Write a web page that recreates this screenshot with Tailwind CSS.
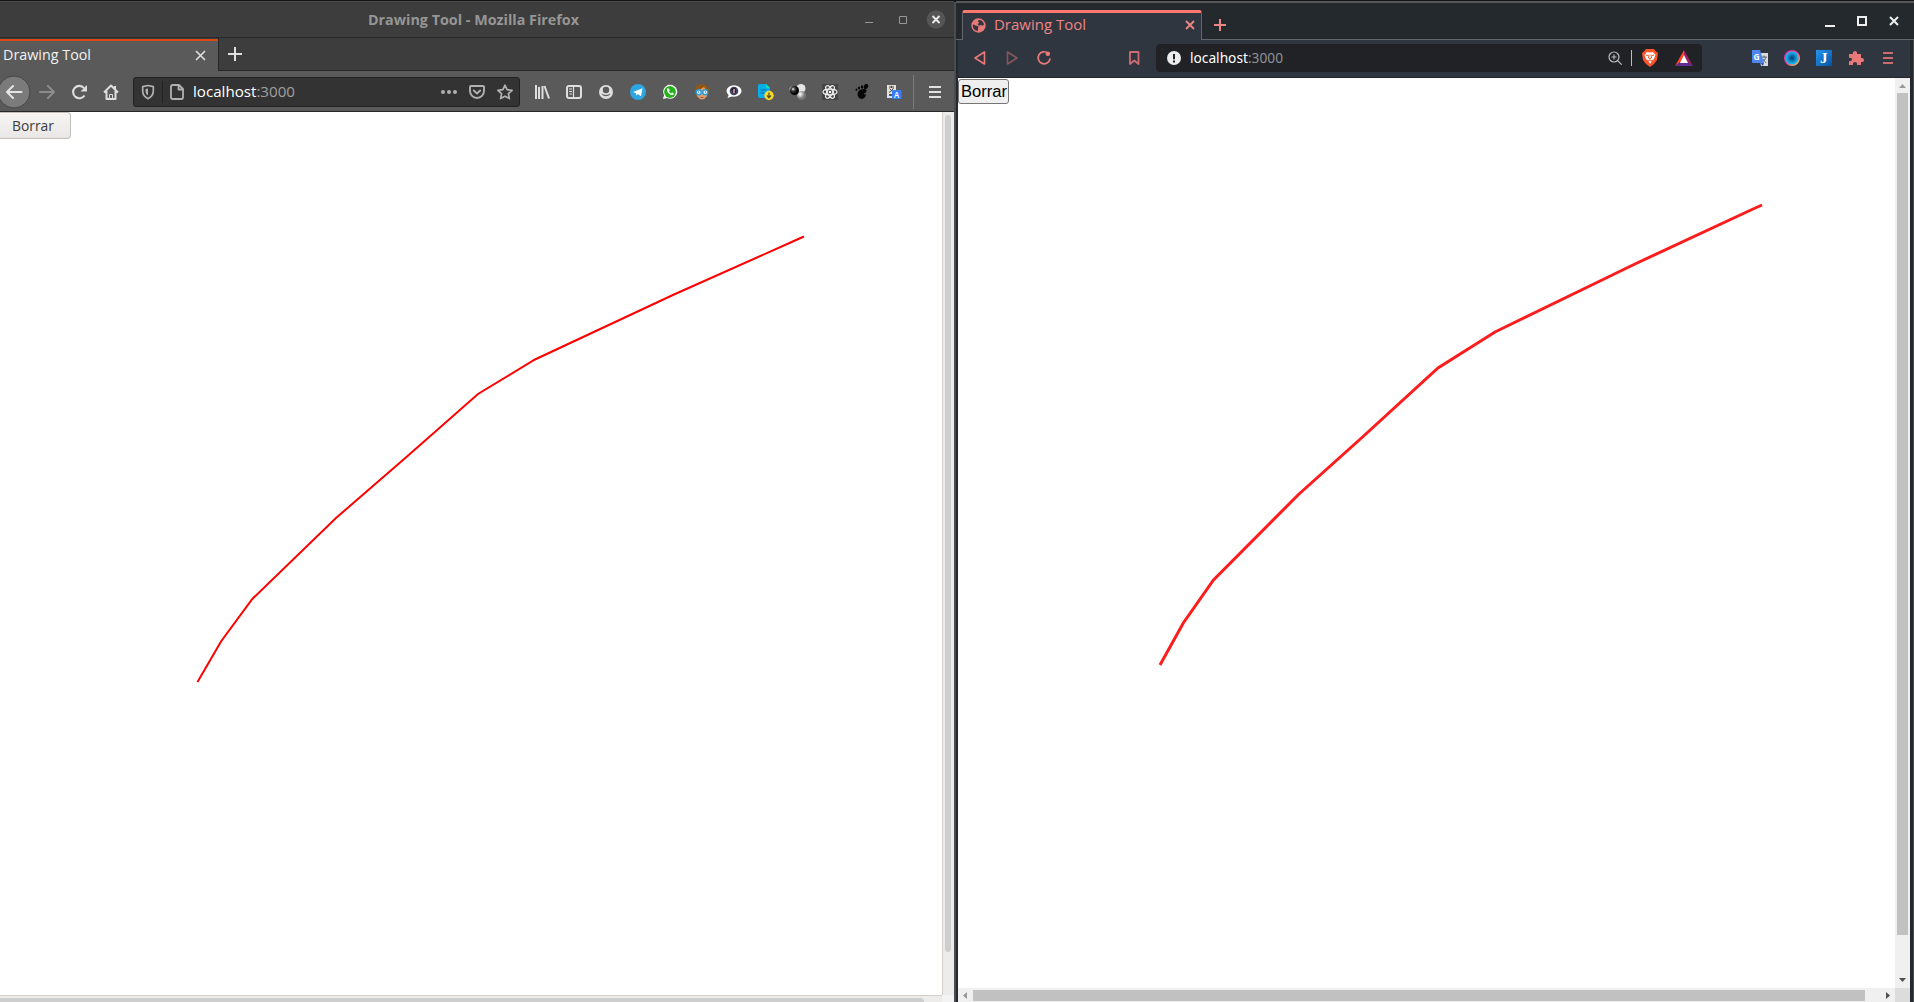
<!DOCTYPE html>
<html lang="es">
<head>
<meta charset="utf-8">
<title>Drawing Tool</title>
<script src="https://cdn.jsdelivr.net/npm/@tailwindcss/browser@4"></script>
</head>
<body class="w-[1914px] h-[1002px] overflow-hidden bg-[#111] flex font-['Open_Sans',sans-serif]">

<!-- Firefox window -->
<section class="w-[954px] h-full flex flex-col shrink-0 bg-[#3d3d3d]">
  <header class="h-[38px] shrink-0 flex items-center border-t border-t-[#151515] border-b border-b-[#292929]">
    <div class="w-full h-full border-t border-[#4a4a4a] flex items-center">
      <h1 class="ml-[368px] w-[215px] text-[13.5px] font-bold text-[#969696] whitespace-nowrap leading-none"><svg class="block overflow-visible" width="211" height="18"><text x="0" y="14" textLength="211" lengthAdjust="spacingAndGlyphs" fill="#969696">Drawing Tool - Mozilla Firefox</text></svg></h1>
      <div class="ml-auto flex items-center pr-[9px] text-[#969696]">
        <svg class="mr-[14px]" width="20" height="18"><path d="M8 11.500h8" stroke="currentColor"/></svg>
        <svg class="mr-[14px]" width="20" height="18"><path d="M8.500 5.500h7v7h-7z" stroke="currentColor" fill="none"/></svg>
        <svg width="20" height="18" class="overflow-visible"><circle cx="11" cy="8.500" r="9.300" fill="#565656"/><path d="m7.500 5 7 7m0-7-7 7" stroke="#eee" stroke-width="1.800"/></svg>
      </div>
    </div>
  </header>

  <div class="h-[33px] shrink-0 flex">
    <div class="w-[218px] h-full mt-px bg-[#5a5a5a] border-t-2 border-[#dd4814] flex items-center">
      <svg class="overflow-visible ml-[3px]" width="90" height="20"><text x="0" y="13" font-size="14" textLength="88" lengthAdjust="spacingAndGlyphs" fill="#f2f2f2">Drawing Tool</text></svg>
      <svg class="ml-auto mr-[12px] mb-[2px]" width="11" height="11"><path d="m1 1 9 9m0-9-9 9" stroke="#ddd" stroke-width="1.700"/></svg>
    </div>
    <div class="grow h-full border-l border-b border-[#272727] flex items-center">
      <svg class="ml-[9px]" width="14" height="14"><path d="M7 0v14M0 7h14" stroke="#e0e0e0" stroke-width="2"/></svg>
    </div>
  </div>

  <nav class="h-[41px] shrink-0 bg-[#5a5a5a] border-b border-[#272727] pt-px flex items-center text-[#dedede]">
    <div class="w-[31px] h-[34px] overflow-hidden flex justify-end shrink-0">
      <svg class="shrink-0" width="34" height="34" viewBox="0 0 34 34"><circle cx="17" cy="17" r="16" fill="#7b7b7b" stroke="#454545"/><path d="M24.500 17H10m6-6-6 6 6 6" fill="none" stroke="#e5e5e5" stroke-width="2" stroke-linecap="round" stroke-linejoin="round"/></svg>
    </div>
    <div class="flex w-24 shrink-0">
      <svg class="mx-2" width="16" height="16" fill="none" stroke="#8c8c8c" stroke-width="2" stroke-linecap="round" stroke-linejoin="round"><path d="M1 8h14M9 2l6 6-6 6"/></svg>
      <svg class="mx-2" width="16" height="16" fill="none" stroke="currentColor" stroke-width="2.100"><path d="M13.500 11.500A6.200 6.200 0 1 1 13 4"/><path d="M9.500 7.500H16V1z" fill="currentColor" stroke="none"/></svg>
      <svg class="mx-2" width="16" height="16" fill="none" stroke="currentColor" stroke-width="2" stroke-linejoin="round"><path d="m1 8.500 7-7 7 7M3.500 7v8h9V7M12 2v3"/><path d="M6.500 15v-4.500h3V15z" stroke-width="1"/></svg>
    </div>
    <div class="ml-[6px] w-[387px] h-[30px] shrink-0 rounded-[3px] border border-[#222] bg-[#333] flex items-center text-[#b1b1b3]">
      <svg class="ml-[6px]" width="16" height="16" fill="none" stroke="currentColor" stroke-width="1.700" stroke-linejoin="round"><path d="M8 1.500 13.300 2.700V7c0 4-2.500 6.200-5.300 7.700C5.200 13.200 2.700 11 2.700 7V2.700z"/><path d="M8 4.500 5.500 5v2c0 2.200 1 3.500 2.500 4.600z" fill="currentColor" stroke="none"/></svg>
      <div class="w-px h-[22px] bg-[#222] ml-[6px]"></div>
      <svg class="ml-[6px]" width="16" height="16" fill="none" stroke="currentColor" stroke-width="1.800" stroke-linejoin="round"><path d="M3.500 1H10l4 4v8.500a1.500 1.500 0 0 1-1.500 1.500h-9A1.500 1.500 0 0 1 2 13.500v-11A1.500 1.500 0 0 1 3.500 1zM9.500 1v4.500H14"/></svg>
      <svg class="ml-[8px] overflow-visible" width="104" height="20"><text x="0" y="15" font-size="14.500" textLength="102" lengthAdjust="spacingAndGlyphs" fill="#fff">localhost<tspan fill="#a0a0a0">:3000</tspan></text></svg>
      <svg class="ml-auto" width="16" height="16" fill="currentColor"><circle cx="2" cy="8" r="2"/><circle cx="8" cy="8" r="2"/><circle cx="14" cy="8" r="2"/></svg>
      <svg class="ml-3" width="16" height="16" fill="none" stroke="currentColor" stroke-width="1.900" stroke-linecap="round" stroke-linejoin="round"><path d="M2 2h12a1 1 0 0 1 1 1v4a7 7 0 0 1-14 0V3a1 1 0 0 1 1-1z"/><path d="m4.800 6.500 3.200 3 3.200-3"/></svg>
      <svg class="ml-3 mr-[6px]" width="16" height="16" fill="none" stroke="currentColor" stroke-width="1.700" stroke-linejoin="round"><path d="m8 1.200 2.100 4.500 5 .6-3.700 3.400 1 4.900L8 12.200l-4.400 2.400 1-4.900L.9 6.300l5-.6z"/></svg>
    </div>
    <div class="ml-[6px] flex shrink-0">
      <svg class="mx-2" width="16" height="16" fill="none" stroke="currentColor" stroke-width="2"><path d="M2 1v14M5 3v12M8.500 2v13M10.500 2l4.500 12.500"/></svg>
      <svg class="mx-2" width="16" height="16" fill="none" stroke="currentColor"><rect x="1" y="2" width="14" height="12" rx="2" stroke-width="2"/><path d="M7.500 2v12" stroke-width="1.200"/><path d="M3 5h3M3 7.500h3M3.500 10H6"/></svg>
      <svg class="mx-2" width="16" height="16"><circle cx="8" cy="8" r="7" fill="currentColor"/><path d="M8 2.800a3.200 3.200 0 1 1 0 6.400 3.200 3.200 0 0 1 0-6.400M3.500 9.200c1 4 8 4 9 0-2.500 2.300-6.500 2.300-9 0" fill="#5a5a5a"/></svg>
      <svg class="mx-2" width="16" height="16"><circle cx="8" cy="8" r="8" fill="#2ca5e0"/><path d="M3 8 12.500 4.200 11 12.300 7.800 10l-1.300 1.700-.5-2.500z" fill="#fff"/></svg>
      <svg class="mx-2" width="16" height="16"><path d="m1 15 1.100-3.900A7 7 0 1 1 5 13.900z" fill="#fff"/><circle cx="8" cy="8" r="5.900" fill="#24b31b"/><path d="M5.500 4.200c-2.200 2.300 2.600 8.500 6 6.200.9-.9-.3-1.500-1.500-1.900l-.8.900c-1.200-.5-1.900-1.200-2.200-2.200l.7-.8c-.4-1.400-.8-2.500-2.200-2.200z" fill="#fff"/></svg>
      <svg class="mx-2" width="16" height="16"><path d="M1.500 9C0 3 3 .5 8 .5S16 3 14.500 9l-1 4h-11z" fill="#945711"/><path d="M3 6q5-1 7-3l3 4v5q-5 7-10 0z" fill="#dda06e"/><circle cx="4.700" cy="8.300" r="2.500" fill="#e3f6ff" stroke="#279bdd" stroke-width="1.400"/><circle cx="11.300" cy="8.300" r="2.500" fill="#e3f6ff" stroke="#279bdd" stroke-width="1.400"/><path d="M4 8h1m6 0h1" stroke="#125988"/><path d="M6.500 13.500h3" stroke="#a75040"/></svg>
      <svg class="mx-2" width="16" height="16"><ellipse cx="8" cy="7" rx="7.500" ry="5.700" fill="#fff"/><path d="M3 10 1.500 14 7 12z" fill="#fff"/><circle cx="8" cy="7" r="4.300" fill="#414466"/><path d="M5 5q2-3 5 0v4H7z" fill="#242537"/><path d="M7 5h2v4H7z" fill="#b6868b"/></svg>
      <svg class="mx-2 overflow-visible" width="16" height="16"><path d="M1.500 0H8l4 4v10H1.500Q0 14 0 12V2Q0 0 1.500 0z" fill="#05aeea"/><path d="M8 0v4h4z" fill="#0fdfc5"/><path d="M2.500 6h6m-6 3h4" stroke="#126b9c"/><circle cx="11" cy="11.500" r="4.700" fill="#f8d92d"/><path d="M11 8.500v5m-2-2 2 2.200 2-2.200" stroke="#575326" stroke-width="1.300" fill="none"/></svg>
      <svg class="mx-2 overflow-visible" width="16" height="16"><defs><radialGradient id="black" cx=".35" cy=".35"><stop stop-color="#fff"/><stop offset=".4" stop-color="#444"/><stop offset="1" stop-color="#000"/></radialGradient><radialGradient id="gray" cx=".35" cy=".35"><stop stop-color="#fff"/><stop offset="1" stop-color="#777"/></radialGradient></defs><circle cx="11" cy="4.500" r="4.500" fill="#e4e4e4"/><circle cx="11.500" cy="11.500" r="4.500" fill="url(#gray)"/><circle cx="2" cy="5" r="2.500" fill="#bbb"/><circle cx="4.500" cy="6.500" r="4.500" fill="url(#black)"/></svg>
      <svg class="mx-2" width="16" height="16"><path d="M0 0h16v16H0z" fill="#444"/><g fill="none" stroke="#eee" stroke-width="1.200"><ellipse cx="8" cy="8" rx="7" ry="2.800"/><ellipse cx="8" cy="8" rx="7" ry="2.800" transform="rotate(60 8 8)"/><ellipse cx="8" cy="8" rx="7" ry="2.800" transform="rotate(120 8 8)"/></g><circle cx="8" cy="8" r="1.300" fill="#fff"/></svg>
      <svg class="mx-2" width="16" height="16" fill="#050505"><path d="M7 5.500C10.500 4 14 5.500 12 8.200c-.8 1.200-2.500 1-2 2 .3.600 1.200-.3 1.700.4.700 1.400-1.500 4.500-4.200 4.400C3.500 14.800 1.500 7.500 7 5.500z"/><ellipse cx="12" cy="2.500" rx="2" ry="2.800" transform="rotate(28 12 2.500)"/><ellipse cx="8" cy="3" rx="1.200" ry="1.800"/><ellipse cx="5" cy="4" rx="1" ry="1.500"/><ellipse cx="2.500" cy="5.800" rx=".9" ry="1.300"/></svg>
      <svg class="mx-2 overflow-visible" width="16" height="16"><path d="M1 1h9v9H1z" fill="#e5e1d6"/><path d="M3 3h5M5.500 1.800V4M7.500 4Q6 7 3 8.500M3.500 4.500 8 9" stroke="#474747" fill="none"/><path d="M2 10v3h4" stroke="#d8e4f8" stroke-width="2" fill="none"/><rect x="6" y="6" width="9.500" height="9" rx="1" fill="#397df4"/><text x="8" y="13.500" font-size="8" font-weight="600" fill="#fff">A</text></svg>
    </div>
    <div class="w-px h-[34px] bg-[#7b7b7b] ml-[3px]"></div>
    <svg class="ml-[15px]" width="12" height="14"><path d="M0 2h12M0 7h12M0 12h12" stroke="#e0e0e0" stroke-width="2"/></svg>
  </nav>

  <main class="grow bg-white flex min-h-0">
    <div class="w-[942px] relative">
      <button class="w-[71px] h-[27px] border border-l-0 border-[#c5bdb7] rounded-r bg-linear-to-b from-[#f6f5f4] to-[#e9e8e7] flex items-center"><svg class="ml-[12px] overflow-visible" width="44" height="18"><text x="0" y="14" font-size="14" textLength="42" lengthAdjust="spacingAndGlyphs" fill="#3c3c3c">Borrar</text></svg></button>
      <svg class="absolute left-0 top-0" width="942" height="883" viewBox="0 112 942 883" fill="none"><path d="M197.500 682 221 641.500 252.300 599 336 518 407 456.500 478 394 535 359.500 674 294.500 795 240.500 804 236.500" stroke="#fe0000" stroke-width="2"/></svg>
    </div>
    <div class="w-3 border-l border-[#d3cec9] bg-[#edeceb]"><div class="ml-[2px] mt-[3px] w-[6px] h-[837px] rounded-full bg-[#cecece]"></div></div>
  </main>
  <footer class="h-[7px] shrink-0 flex bg-[#f4f3f3]"><div class="w-[942px] border-t border-[#d3cec9] bg-[#edeceb] pt-[2px]"><div class="w-[924px] h-1 rounded-tr bg-[#cecece]"></div></div></footer>
</section>

<div class="w-[2px] h-full shrink-0 bg-[#4a4d50] mt-[2px]"></div>
<!-- Brave window -->
<section class="w-[958px] h-full shrink-0 border-t border-[#151515] bg-[#24292e] flex flex-col">
  <header class="h-[39px] shrink-0 border-t-2 border-t-[#57565b] flex text-[#ee8585]">
    <div class="w-[6px] border-b border-[#66676c]"></div>
    <div class="w-[240px] h-[30px] mt-[7px] pb-[3px] rounded-t-[3px] bg-[#30363f] border-x border-[#66676c] border-t-3 border-t-[#ff796f] flex items-center">
      <svg class="ml-2" width="15" height="15"><circle cx="7.500" cy="7.500" r="7.200" fill="#e97979"/><path d="M1.800 6.500c2 .2 2.500 1.500 4.500 1.500 1.500 0 1.500 1.200.7 2v2.800C4 12.800 1.500 10.500 1.800 6.500zM7.500 2C11 2 12.500 4 13 6.500l-1.500 1.200-1.300-.8-2 .8-1.700-1.500 1.700-1.500-1.200-1.200z" fill="#30363f"/></svg>
      <svg class="ml-[8px] overflow-visible" width="94" height="20"><text x="0" y="15" font-size="14" textLength="92" lengthAdjust="spacingAndGlyphs" fill="#ee8585">Drawing Tool</text></svg>
      <svg class="ml-auto mr-[6px]" width="10" height="10"><path d="m1 1 8 8m0-8-8 8" stroke="currentColor" stroke-width="1.800"/></svg>
    </div>
    <div class="grow border-b border-[#66676c] flex items-start pt-4">
      <svg class="ml-[12px]" width="12" height="12"><path d="M6 0v12M0 6h12" stroke="currentColor" stroke-width="2"/></svg>
      <div class="ml-auto mr-[15px] flex gap-[22px] text-[#eee] -mt-1">
        <svg width="10" height="12"><path d="M0 11h10" stroke="currentColor" stroke-width="2"/></svg>
        <svg width="10" height="12"><path d="M1 2h8v8H1z" fill="none" stroke="currentColor" stroke-width="2"/></svg>
        <svg width="10" height="12"><path d="m1 2 8 8m0-8-8 8" stroke="currentColor" stroke-width="2"/></svg>
      </div>
    </div>
  </header>
  <div class="grow flex min-h-0">
    <div class="w-[2px]"></div>
    <div class="w-[952px] flex flex-col">
      <nav class="h-[38px] shrink-0 bg-[#30363f] border-b border-[#22262b] pb-px flex items-center text-[#e97979]">
        <div class="ml-[14px] flex shrink-0 gap-4">
          <svg width="16" height="16" fill="none" stroke="currentColor" stroke-width="1.600" stroke-linejoin="round"><path d="M12.500 2v12L3 8z"/></svg>
          <svg width="16" height="16" fill="none" stroke="#87545c" stroke-width="1.600" stroke-linejoin="round"><path d="M3.500 2v12L13 8z"/></svg>
          <svg width="16" height="16" fill="none" stroke="currentColor" stroke-width="1.700" stroke-linecap="round"><path d="M12 3.200A6 6 0 1 0 14 9"/><circle cx="11.800" cy="3.800" r="2.300" fill="currentColor" stroke="none"/></svg>
        </div>
        <svg class="ml-[74px] shrink-0" width="16" height="16" fill="none" stroke="#cd6c70" stroke-width="1.800" stroke-linejoin="round"><path d="M4 2h8.500v12L8.250 10.500 4 14z"/></svg>
        <div class="ml-[14px] w-[546px] h-7 rounded bg-[#212226] flex items-center shrink-0">
          <svg class="ml-[11px]" width="14" height="14"><circle cx="7" cy="7" r="7" fill="#ececec"/><path d="M7 3v5.300M7 9.600v2" stroke="#212226" stroke-width="2"/></svg>
          <svg class="ml-[9px] overflow-visible font-['Noto_Sans']" width="95" height="18"><text x="0" y="14" font-size="13.500" textLength="93" lengthAdjust="spacingAndGlyphs" fill="#fff">localhost<tspan fill="#8f9195">:3000</tspan></text></svg>
          <svg class="ml-auto" width="14" height="14" fill="none" stroke="#bbb" stroke-width="1.200"><circle cx="6" cy="6" r="5"/><path d="m9.700 9.700 4 4M6 3.500v5M3.500 6h5"/></svg>
          <div class="ml-[9px] w-px h-4 bg-[#bbb]"></div>
          <svg class="ml-[10px]" width="16" height="18"><path d="m4 0h8l1.500 2L16 4l-1 7-3 4-4 3-4-3-3-4L0 4l2.500-2z" fill="#fb542b"/><path d="m5 3 3 .5 3-.5 2.500 3-1.500 4-2 1.500L8 15l-2-3.500L4 10 2.500 6z" fill="#fff"/><path d="m4 6 2 .7M12 6l-2 .7M7 5.500 6.500 9 8 10l1.500-1L9 5.500M6 12l2-1 2 1" fill="none" stroke="#fb542b"/></svg>
          <svg class="ml-[17px] mr-[9px]" width="18" height="16"><path d="M9 0 0 16 9 9.500z" fill="#ff4724"/><path d="M9 0 18 16 9 9z" fill="#9e1f63"/><path d="M0 16h18l-5-4H5z" fill="#662d91"/><path d="m9 5 4 8H5z" fill="#fff"/></svg>
        </div>
        <div class="ml-[50px] flex gap-4 shrink-0">
          <svg width="16" height="16"><path d="M6 3h10v13H9z" fill="#dadada"/><path d="M9 7h6M12 5.500V8m2-1q-1 4-4 5m1-3 3 4" stroke="#607080" fill="none"/><path d="M0 0h8l4 13H1Q0 13 0 12z" fill="#4d87ee"/><path d="m8 13 3 3 1-3z" fill="#315fb8"/><text x="1.500" y="9.500" font-size="8.500" font-weight="700" fill="#fff">G</text></svg>
          <svg width="16" height="16"><defs><linearGradient id="ring" x2="1" y2="1"><stop stop-color="#d630aa"/><stop offset=".5" stop-color="#f44388"/><stop offset="1" stop-color="#ffd34d"/></linearGradient><radialGradient id="lens"><stop offset=".15" stop-color="#064d85"/><stop offset=".8" stop-color="#16b5f4"/></radialGradient></defs><circle cx="8" cy="8" r="7.300" fill="url(#lens)" stroke="url(#ring)" stroke-width="1.400"/></svg>
          <svg width="16" height="16"><defs><linearGradient id="blue" x2="1" y2="1"><stop stop-color="#2495f0"/><stop offset="1" stop-color="#0553a2"/></linearGradient></defs><path d="M0 0h16v16H0z" fill="url(#blue)"/><text x="4" y="13" font-family="Liberation Serif" font-weight="700" font-size="15" fill="#fff">J</text></svg>
          <svg width="16" height="16" fill="currentColor"><path d="M1 4h4C4 0 10 0 9 4h4v4c4-1 4 5 0 4v3H9c1-4-5-4-4 0H1v-4c4 1 4-4 0-3z"/></svg>
          <svg width="16" height="16" stroke="#c96c70" stroke-width="2"><path d="M3 3h10M3 8h10M3 13h10"/></svg>
        </div>
      </nav>
      <main class="grow flex min-h-0 bg-white">
        <div class="w-[937px] relative">
          <button class="w-[51px] h-[25px] mt-px border border-[#767676] rounded-[3px] bg-[#efefef] font-['Liberation_Sans'] flex items-center"><svg class="ml-[2px] overflow-visible" width="46" height="20"><text x="0" y="14.500" font-size="16" textLength="46" lengthAdjust="spacingAndGlyphs">Borrar</text></svg></button>
          <svg class="absolute left-0 top-0" width="937" height="910" viewBox="958 78 937 910" fill="none"><path d="M1160 665 1183.300 623 1213.500 580 1298.500 494.500 1362 437.500 1438 368 1495 332 1636 263.500 1752 209.500 1762 205" stroke="#ff1c1c" stroke-width="3"/></svg>
        </div>
        <div class="w-[15px] bg-[#f0f0f0] flex flex-col items-center">
          <svg class="mt-[6px] mb-[5px] shrink-0" width="7" height="4"><path d="M0 4 3.500 0 7 4z" fill="#9a9a9a"/></svg>
          <div class="w-[11px] h-[842px] bg-[#c1c1c1]"></div>
          <svg class="mt-auto mb-[6px]" width="7" height="4"><path d="M0 0 3.500 4 7 0z" fill="#505050"/></svg>
        </div>
      </main>
      <footer class="h-[14px] shrink-0 bg-[#f0f0f0] flex items-center">
        <svg class="ml-[5px] mr-[6px]" width="4" height="7"><path d="M4 0 0 3.500 4 7z" fill="#9a9a9a"/></svg>
        <div class="w-[892px] h-[11px] bg-[#c1c1c1]"></div>
        <svg class="ml-auto mr-[5px]" width="4" height="7"><path d="M0 0 4 3.500 0 7z" fill="#505050"/></svg>
        <div class="w-[15px] h-full bg-[#dcdcdc]"></div>
      </footer>
    </div>
    <div class="w-[3px]"></div><div class="w-px bg-[#4a4d50]"></div>
  </div>
</section>
</body>
</html>
